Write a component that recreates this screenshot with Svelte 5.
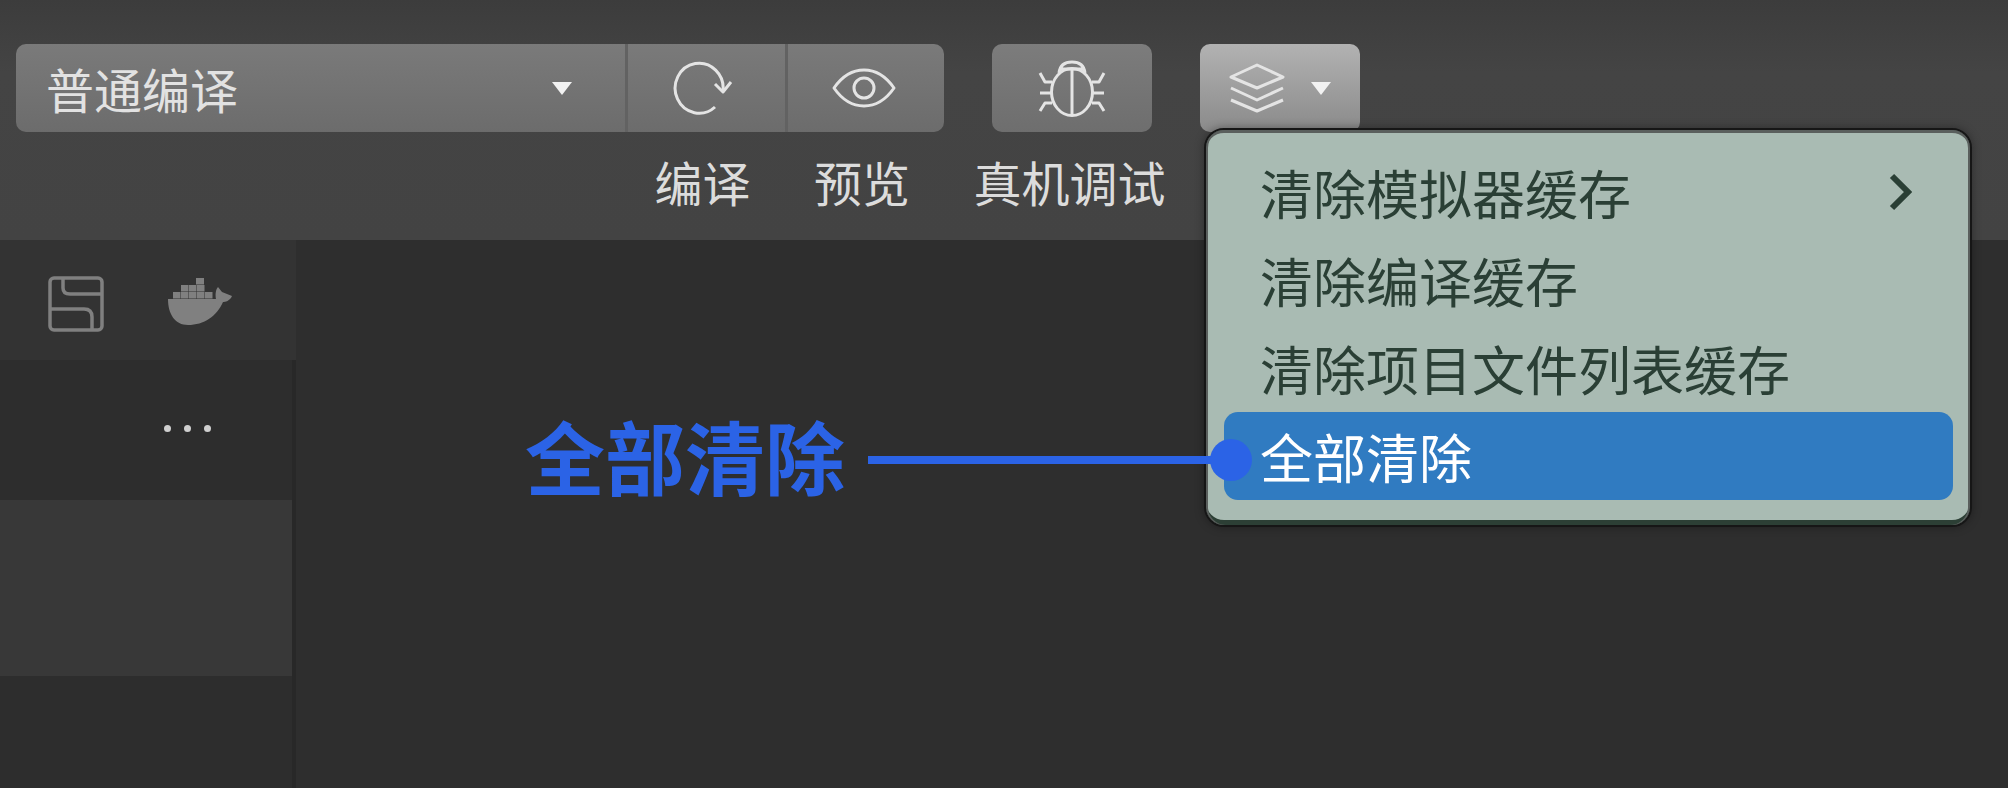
<script>
    const menuItems = [
        { label: "清除模拟器缓存", more: true },
        { label: "清除编译缓存" },
        { label: "清除项目文件列表缓存" },
        { label: "全部清除", active: true },
    ];
    const shipRow = [5, 13, 21, 29, 37];
    const shipUpper = [13, 21, 29];
</script>

<div class="page">
    <header class="toolbar">
        <div class="group">
            <div class="seg select">
                <span>普通编译</span>
                <i class="caret"></i>
            </div>
            <div class="seg refresh">
                <svg width="64" height="56" viewBox="0 0 64 56">
                    <path d="M52 31A24 25 0 1 0 44 47" />
                    <path d="M44 24L52 32L60 22" />
                </svg>
            </div>
            <div class="seg eye">
                <svg width="64" height="40" viewBox="0 0 64 40">
                    <path d="M2 20C11 7 21 2 32 2S53 7 62 20C53 33 43 38 32 38S11 33 2 20Z" />
                    <circle cx="32" cy="20" r="10" />
                </svg>
            </div>
        </div>
        <div class="btn bug">
            <svg width="68" height="60" viewBox="0 0 68 60">
                <ellipse cx="34" cy="34" rx="20.5" ry="23.5" />
                <path d="M34 10V58M21 15C22 6 28 4 34 4S46 6 47 15M21 11H47" />
                <path d="M2 15L7 24H14M66 15L61 24H54M2 35H14M66 35H54M2 53L7 45H14M66 53L61 45H54" />
            </svg>
        </div>
        <div class="btn layers">
            <svg width="56" height="50" viewBox="0 0 56 50">
                <path d="M28 2L54 14L28 25L2 14Z" />
                <path d="M2 25L28 37L54 25M2 37L28 48L54 37" />
            </svg>
            <i class="caret"></i>
        </div>
        <div class="label compile">编译</div>
        <div class="label preview">预览</div>
        <div class="label debug">真机调试</div>
    </header>

    <div class="body">
        <aside class="sidebar">
            <div class="tabs">
                <svg class="panel-icon" width="56" height="56" viewBox="0 0 56 56">
                    <rect x="2" y="2" width="52" height="52" rx="4" />
                    <path d="M15 3V12Q15 18 22 18H54M2 33H36Q44 33 44 41V54" />
                </svg>
                <svg class="ship" width="64" height="48" viewBox="0 0 64 48">
                    <rect x="28" y="0" width="8" height="6.5" />
                    {#each shipUpper as x}
                        <rect {x} y="7" width="7.5" height="6.5" />
                    {/each}
                    {#each shipRow as x}
                        <rect {x} y="14" width="7.5" height="6.5" />
                    {/each}
                    <path d="M0 21H48C47 16 48 11 50 9L54 14L64 18C62 23 57 24 55 24C49 38 36 47 20 47C7 47 0 36 0 21Z" />
                </svg>
            </div>
            <div class="list">
                <div class="row">
                    <i></i><i></i><i></i>
                </div>
                <div class="row-active"></div>
            </div>
        </aside>
        <main class="content"></main>
    </div>

    <div class="menu">
        {#each menuItems as item}
            <div class="item" class:active={item.active}>
                <span>{item.label}</span>
                {#if item.more}
                    <svg width="24" height="38" viewBox="0 0 24 38">
                        <path d="M4 3L20 19L4 35" />
                    </svg>
                {/if}
            </div>
        {/each}
    </div>

    <div class="callout">
        <span>全部清除</span>
        <i class="line"></i>
        <i class="dot"></i>
    </div>
</div>

<style>
    :global(body) {
        background: #2e2e2e;
    }
    .page {
        position: relative;
        width: 2008px;
        height: 788px;
        overflow: hidden;
        font-family: "Noto Sans CJK SC", "Noto Sans", sans-serif;
        background: #2e2e2e;
    }
    .toolbar {
        box-sizing: border-box;
        height: 240px;
        padding: 44px 0 0 16px;
        display: grid;
        grid-template-columns: 609px 160px 159px 48px 160px 48px 160px;
        grid-template-rows: 88px 56px;
        row-gap: 21px;
        background: linear-gradient(#3c3c3c, #444 30%, #434343);
    }
    .group {
        grid-column: 1 / 4;
        display: flex;
        border-radius: 10px;
        overflow: hidden;
        background: linear-gradient(#7a7a7a, #6c6c6c);
    }
    .seg {
        box-sizing: border-box;
        display: flex;
        align-items: center;
        justify-content: center;
        border-left: 3px solid #626262;
    }
    .select {
        width: 609px;
        padding: 0 53px 0 30px;
        justify-content: space-between;
        border-left: none;
        color: #e2e2e2;
        font-size: 48px;
        line-height: 88px;
    }
    .refresh {
        width: 160px;
        padding-right: 8px;
    }
    .eye {
        width: 159px;
        padding-right: 5px;
    }
    .btn {
        display: flex;
        align-items: center;
        justify-content: center;
        border-radius: 10px;
    }
    .bug {
        grid-column: 5;
        background: linear-gradient(#7c7c7c, #6e6e6e);
    }
    .layers {
        grid-column: 7;
        gap: 26px;
        box-sizing: border-box;
        background: linear-gradient(#b2b2b2, #8a8a8a);
    }
    .caret {
        width: 0;
        height: 0;
        border-left: 10px solid transparent;
        border-right: 10px solid transparent;
        border-top: 13px solid #f2f2f2;
    }
    svg {
        fill: none;
        stroke: #e4e4e4;
        stroke-width: 3;
        stroke-linejoin: round;
    }
    .label {
        box-sizing: border-box;
        padding-right: 5px;
        display: flex;
        justify-content: center;
        white-space: nowrap;
        color: #dcdcdc;
        font-size: 48px;
        line-height: 56px;
    }
    .compile {
        grid-column: 2;
    }
    .preview {
        grid-column: 3;
    }
    .debug {
        grid-column: 5;
    }
    .body {
        display: flex;
        height: 548px;
    }
    .sidebar {
        width: 296px;
        display: flex;
        flex-direction: column;
    }
    .tabs {
        box-sizing: border-box;
        height: 120px;
        padding: 36px 0 0 48px;
        display: flex;
        align-items: flex-start;
        gap: 64px;
        background: #333;
    }
    .panel-icon {
        stroke: #808080;
        stroke-width: 3.5;
    }
    .ship {
        stroke: none;
        fill: #808080;
        margin-top: 2px;
    }
    .list {
        flex: 1;
        border-right: 4px solid #282828;
        background: #2d2d2d;
    }
    .row {
        box-sizing: border-box;
        height: 136px;
        padding-left: 164px;
        display: flex;
        align-items: center;
        gap: 13px;
    }
    .row i {
        width: 7px;
        height: 7px;
        border-radius: 50%;
        background: #cfcfcf;
    }
    .row-active {
        height: 176px;
        margin-top: 4px;
        background: #383838;
    }
    .content {
        flex: 1;
    }
    .menu {
        position: absolute;
        left: 1204px;
        top: 128px;
        box-sizing: border-box;
        width: 768px;
        height: 399px;
        padding: 18px 17px 0 18px;
        border: 2px solid #161616;
        border-radius: 20px;
        background: #a9bbb3;
        box-shadow:
            inset 0 3px 0 #5a5f5d,
            inset 2px 0 0 #5a5f5d,
            inset -2px 0 0 #5a5f5d,
            inset 0 -5px 0 #2c3f35,
            0 0 10px rgba(0, 0, 0, 0.35);
    }
    .item {
        box-sizing: border-box;
        height: 88px;
        padding: 0 41px 0 36px;
        display: flex;
        align-items: center;
        justify-content: space-between;
        border-radius: 14px;
        color: #2a3f35;
        font-size: 53px;
        line-height: 88px;
    }
    .item svg {
        stroke: #2a3f35;
        stroke-width: 6;
        stroke-linejoin: miter;
    }
    .active {
        background: #307bc1;
        color: #fff;
    }
    .callout {
        position: absolute;
        left: 525px;
        top: 400px;
        width: 728px;
        height: 120px;
        display: flex;
        align-items: center;
        color: #2b63e6;
        font-size: 80px;
        font-weight: 700;
        line-height: 120px;
    }
    .callout span {
        margin-top: -12px;
    }
    .line {
        width: 343px;
        height: 8px;
        margin-left: 23px;
        background: #2b63e6;
    }
    .dot {
        width: 42px;
        height: 42px;
        margin-left: -1px;
        border-radius: 50%;
        background: #2b63e6;
    }
</style>
